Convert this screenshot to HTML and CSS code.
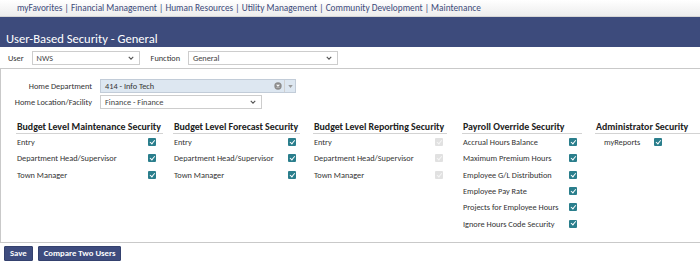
FILE: index.html
```html
<!DOCTYPE html>
<html>
<head>
<meta charset="utf-8">
<link rel="stylesheet" href="styles.css">
</head>
<body>
<nav class="topnav">
  <a>myFavorites</a> | <a>Financial Management</a> | <a>Human Resources</a> | <a>Utility Management</a> | <a>Community Development</a> | <a>Maintenance</a>
</nav>
<header class="banner"><h1>User-Based Security - General</h1></header>
<div class="filters">
  <label class="flabel">User</label>
  <div class="select sel-user"><span>NWS</span><svg class="chev" viewBox="0 0 8 5"><path d="M1 1l3 3 3-3" fill="none" stroke="#555" stroke-width="1.5"/></svg></div>
  <label class="flabel flabel2">Function</label>
  <div class="select sel-func"><span>General</span><svg class="chev" viewBox="0 0 8 5"><path d="M1 1l3 3 3-3" fill="none" stroke="#555" stroke-width="1.5"/></svg></div>
</div>
<main class="panel">
  <div class="homeform">
    <label class="hlabel">Home Department</label>
    <div class="combo"><span class="combo-text">414 - Info Tech</span><span class="clear"><svg viewBox="0 0 10 10"><circle cx="5" cy="5" r="4.6" fill="#8c8c8c"/><path d="M3.3 3.3l3.4 3.4M6.7 3.3l-3.4 3.4" stroke="#fff" stroke-width="1.4"/></svg></span><span class="drop"><svg viewBox="0 0 6 4"><path d="M0 0h6l-3 4z" fill="#9a9a9a"/></svg></span></div>
    <label class="hlabel">Home Location/Facility</label>
    <div class="select sel-loc"><span>Finance - Finance</span><svg class="chev" viewBox="0 0 8 5"><path d="M1 1l3 3 3-3" fill="none" stroke="#555" stroke-width="1.5"/></svg></div>
  </div>
  <div class="sections">
    <section class="sec s1">
      <h2>Budget Level Maintenance Security</h2>
      <div class="row"><span>Entry</span><i class="cb"></i></div>
      <div class="row"><span>Department Head/Supervisor</span><i class="cb"></i></div>
      <div class="row"><span>Town Manager</span><i class="cb"></i></div>
    </section>
    <section class="sec s2">
      <h2>Budget Level Forecast Security</h2>
      <div class="row"><span>Entry</span><i class="cb"></i></div>
      <div class="row"><span>Department Head/Supervisor</span><i class="cb"></i></div>
      <div class="row"><span>Town Manager</span><i class="cb"></i></div>
    </section>
    <section class="sec s3">
      <h2>Budget Level Reporting Security</h2>
      <div class="row"><span>Entry</span><i class="cb off"></i></div>
      <div class="row"><span>Department Head/Supervisor</span><i class="cb off"></i></div>
      <div class="row"><span>Town Manager</span><i class="cb off"></i></div>
    </section>
    <section class="sec s4">
      <h2>Payroll Override Security</h2>
      <div class="row"><span>Accrual Hours Balance</span><i class="cb"></i></div>
      <div class="row"><span>Maximum Premium Hours</span><i class="cb"></i></div>
      <div class="row"><span>Employee G/L Distribution</span><i class="cb"></i></div>
      <div class="row"><span>Employee Pay Rate</span><i class="cb"></i></div>
      <div class="row"><span>Projects for Employee Hours</span><i class="cb"></i></div>
      <div class="row"><span>Ignore Hours Code Security</span><i class="cb"></i></div>
    </section>
    <section class="sec s5">
      <h2>Administrator Security</h2>
      <div class="row row5"><span>myReports</span><i class="cb"></i></div>
    </section>
  </div>
</main>
<div class="actions">
  <button class="btn">Save</button>
  <button class="btn">Compare Two Users</button>
</div>
</body>
</html>
```
FILE: styles.css
```css
html, body { margin: 0; padding: 0; background: #fff; }
body {
  font-family: "Carlito", "Lato", "Liberation Sans", sans-serif;
  color: #222; width: 700px; height: 265px; overflow: hidden;
}

.topnav {
  height: 17px; box-sizing: border-box;
  background: linear-gradient(#ffffff, #ededed);
  border-bottom: 1px solid #d6d6d6;
  padding-left: 17px; font-size: 9.3px; line-height: 16px; color: #3c4a7a;
  white-space: nowrap;
}
.topnav a { color: #3c4a7a; }

.banner { height: 30px; background: #3d4b7c; box-sizing: border-box; padding: 14px 0 0 6px; overflow: hidden; }
.banner h1 { margin: 0; font-weight: normal; color: #fff; font-size: 12.6px; line-height: 15px; }

.filters { display: flex; align-items: center; height: 21px; padding-top: 4px; padding-bottom: 3px; box-sizing: border-box; }
.flabel { font-size: 8.3px; margin-left: 8px; margin-right: 8px; color: #333; }
.flabel2 { margin-left: 11px; margin-right: 8px; }
.select {
  box-sizing: border-box; height: 14px; border: 1px solid #cdcdcd; background: #fff;
  display: flex; align-items: center; justify-content: space-between;
  padding: 0 5px 0 4px; font-size: 8.3px; color: #444;
}
.chev { width: 6px; height: 4px; }
.sel-user { width: 108px; }
.sel-func { width: 150px; }

.panel {
  border-top: 1px solid #c9c9c9; border-left: 1px solid #c9c9c9; border-bottom: 1px solid #c9c9c9;
  height: 175px; box-sizing: border-box;
}
.homeform {
  display: grid; grid-template-columns: 91px auto; column-gap: 8px; row-gap: 2px;
  padding-top: 10px; align-items: center; justify-items: start;
}
.hlabel { justify-self: end; font-size: 8.3px; color: #333; }
.combo {
  box-sizing: border-box; width: 196px; height: 14px; border: 1px solid #c2ccd8; background: #dde7f1;
  display: flex; align-items: center; font-size: 8.3px; color: #333;
}
.combo-text { flex: 1; padding-left: 4px; }
.clear { width: 8px; height: 8px; display: flex; margin-right: 2px; }
.clear svg { width: 8px; height: 8px; }
.drop { width: 10px; height: 12px; border-left: 1px solid #d0d0d0; display: flex; align-items: center; justify-content: center; }
.drop svg { width: 5px; height: 3px; }
.sel-loc { width: 162px; }

.sections { display: flex; padding-left: 15px; margin-top: 12px; }
.sec h2 {
  margin: 0; font-size: 9.9px; font-weight: 700; color: #222; white-space: nowrap;
  line-height: 12px; padding-bottom: 0; border-bottom: 1px solid #d3d3d3;
}
.s1 { width: 147px; margin-right: 10px; }
.s2 { width: 127px; margin-right: 13px; }
.s3 { width: 134px; margin-right: 15px; }
.s4 { width: 120px; margin-right: 13px; }
.s5 { flex: 1; }
.s1 h2, .s2 h2, .s3 h2, .s4 h2, .s5 h2 { padding-left: 1px; }
.row {
  display: flex; align-items: center; justify-content: space-between;
  height: 16.3px; font-size: 8.3px; color: #333; white-space: nowrap; padding-left: 1px;
}
.s1 .row { padding-right: 7px; }
.s2 .row { padding-right: 4px; }
.s3 .row { padding-right: 4px; }
.s4 .row { padding-right: 5px; }
.row5 { justify-content: flex-start; padding-left: 9px; }
.row5 .cb { margin-left: 14px; }

.cb {
  display: inline-block; width: 8px; height: 8px; border-radius: 1px; background: #2a7e8c; position: relative;
}
.cb::after {
  content: ""; position: absolute; left: 2.7px; top: 0.8px; width: 1.8px; height: 3.8px;
  border: solid #fff; border-width: 0 1.4px 1.4px 0; transform: rotate(40deg);
}
.cb.off { background: #e1e1e1; }
.cb.off::after { border-color: #f6f6f6; }

.actions { display: flex; gap: 5px; padding: 3px 0 0 4px; }
.btn {
  font-family: "Carlito", "Lato", sans-serif; font-weight: 700; font-size: 8.7px; color: #fff;
  background: #3e4c7e; border: 1px solid #34416e; border-radius: 1px;
  height: 15px; padding: 0 5px; line-height: 13px;
}
```
